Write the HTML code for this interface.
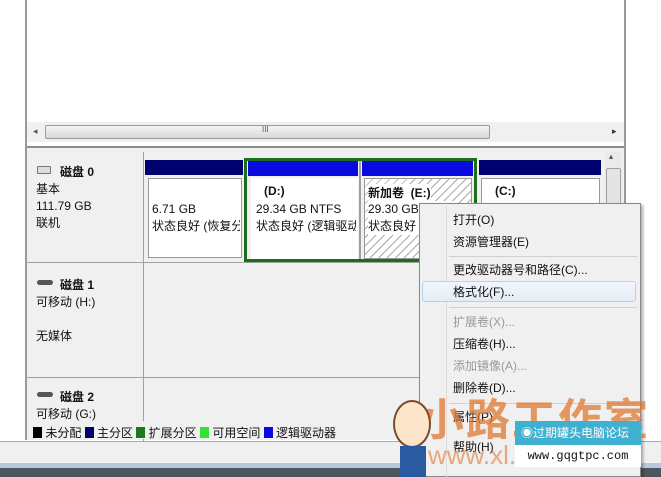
<!DOCTYPE html>
<html><head><meta charset="utf-8"><style>
*{margin:0;padding:0;box-sizing:border-box}
body{width:661px;height:477px;overflow:hidden;background:#fff;position:relative;font-family:"Liberation Sans","Noto Sans CJK SC",sans-serif;font-size:12px;color:#111}
.a{position:absolute}
</style></head><body>
<div class="a" style="left:25px;top:0;width:2px;height:440px;background:#9a9a9a"></div>
<div class="a" style="left:624px;top:0;width:2px;height:440px;background:#9a9a9a"></div>
<div class="a" style="left:27px;top:122px;width:597px;height:20px;background:#f0f0f0"></div>
<div class="a" style="left:33px;top:126px;font-size:9px;color:#555">◂</div>
<div class="a" style="left:612px;top:126px;font-size:9px;color:#333">▸</div>
<div class="a" style="left:45px;top:125px;width:445px;height:14px;border:1px solid #9a9a9a;border-radius:2px;background:linear-gradient(#f4f4f4,#d8d8d8)"></div>
<div class="a" style="left:262px;top:125px;font-size:8px;color:#555">III</div>
<div class="a" style="left:27px;top:146px;width:597px;height:2px;background:#8c8c8c"></div>
<div class="a" style="left:27px;top:148px;width:597px;height:292px;background:#f0f0f0"></div>
<div class="a" style="left:143px;top:152px;width:1px;height:290px;background:#a0a0a0"></div>
<div class="a" style="left:27px;top:262px;width:578px;height:1px;background:#a0a0a0"></div>
<div class="a" style="left:27px;top:377px;width:578px;height:1px;background:#a0a0a0"></div>
<div class="a" style="left:605px;top:152px;width:17px;height:288px;background:#eaeaea"></div>
<div class="a" style="left:609px;top:152px;font-size:8px;color:#444">▴</div>
<div class="a" style="left:606px;top:168px;width:15px;height:60px;border:1px solid #a0a0a0;background:#e4e4e4;border-radius:2px"></div>
<div class="a" style="left:37px;top:166px;width:14px;height:8px;border:1px solid #777;background:#ddd;border-radius:1px"></div>
<div class="a" style="left:60px;top:163px;font-weight:bold">磁盘 0</div>
<div class="a" style="left:36px;top:181px;line-height:17px">基本<br>111.79 GB<br>联机</div>
<div class="a" style="left:145px;top:160px;width:98px;height:15px;background:#00006f"></div>
<div class="a" style="left:148px;top:178px;width:94px;height:80px;background:#fff;border:1px solid #999"></div>
<div class="a" style="left:152px;top:201px;line-height:17px;white-space:nowrap;width:88px;overflow:hidden">6.71 GB<br>状态良好 (恢复分</div>
<div class="a" style="left:244px;top:158px;width:233px;height:104px;border:3px solid #1c6e1c"></div>
<div class="a" style="left:248px;top:161px;width:110px;height:15px;background:#0a0ae0"></div>
<div class="a" style="left:362px;top:161px;width:111px;height:15px;background:#0a0ae0"></div>
<div class="a" style="left:359px;top:161px;width:2px;height:98px;background:#a0a0a0"></div>
<div class="a" style="left:251px;top:178px;width:107px;height:81px;background:#fff"></div>
<div class="a" style="left:364px;top:178px;width:108px;height:81px;background:repeating-linear-gradient(135deg,#fff 0 5px,#aaa 5px 6px);border:1px solid #999"></div>
<div class="a" style="left:264px;top:184px;font-weight:bold">(D:)</div>
<div class="a" style="left:256px;top:201px;line-height:17px;white-space:nowrap;width:100px;overflow:hidden">29.34 GB NTFS<br>状态良好 (逻辑驱动</div>
<div class="a" style="left:368px;top:184px;font-weight:bold;background:#fff">新加卷 &nbsp;(E:)</div>
<div class="a" style="left:368px;top:201px;line-height:17px;white-space:nowrap;background:#fff">29.30 GB NTFS<br>状态良好</div>
<div class="a" style="left:479px;top:160px;width:122px;height:15px;background:#00006f"></div>
<div class="a" style="left:481px;top:178px;width:119px;height:80px;background:#fff;border:1px solid #999"></div>
<div class="a" style="left:495px;top:184px;font-weight:bold">(C:)</div>
<div class="a" style="left:37px;top:280px;width:16px;height:5px;background:#555;border-radius:3px"></div>
<div class="a" style="left:60px;top:276px;font-weight:bold">磁盘 1</div>
<div class="a" style="left:36px;top:293px">可移动 (H:)</div>
<div class="a" style="left:36px;top:327px">无媒体</div>
<div class="a" style="left:37px;top:392px;width:16px;height:5px;background:#555;border-radius:3px"></div>
<div class="a" style="left:60px;top:388px;font-weight:bold">磁盘 2</div>
<div class="a" style="left:36px;top:405px">可移动 (G:)</div>
<div class="a" style="left:28px;top:421px;width:400px;height:18px;background:#f0f0f0"></div>
<div class="a" style="left:33px;top:424px;white-space:nowrap;font-size:12px">
<span style="display:inline-block;width:9px;height:11px;background:#000;vertical-align:-1px"></span> 未分配 <span style="display:inline-block;width:9px;height:11px;background:#00006f;vertical-align:-1px"></span> 主分区 <span style="display:inline-block;width:9px;height:11px;background:#1c7a1c;vertical-align:-1px"></span> 扩展分区 <span style="display:inline-block;width:9px;height:11px;background:#33e033;vertical-align:-1px"></span> 可用空间 <span style="display:inline-block;width:9px;height:11px;background:#0a0ae0;vertical-align:-1px"></span> 逻辑驱动器</div>
<div class="a" style="left:0;top:441px;width:661px;height:22px;background:#f0f0f0;border-top:1px solid #aaa"></div>
<div class="a" style="left:0;top:463px;width:661px;height:5px;background:#b8c8dc"></div>
<div class="a" style="left:0;top:468px;width:661px;height:9px;background:#4e555c"></div>
<!-- context menu -->
<div class="a" style="left:419px;top:203px;width:222px;height:274px;background:#f0f0f0;border:1px solid #888;box-shadow:2px 2px 3px rgba(0,0,0,.35)"></div>
<div class="a" style="left:446px;top:205px;width:1px;height:272px;background:#ddd"></div>
<div class="a" style="left:449px;top:256px;width:188px;height:1px;background:#d0d0d0"></div>
<div class="a" style="left:449px;top:307px;width:188px;height:1px;background:#d0d0d0"></div>
<div class="a" style="left:449px;top:403px;width:188px;height:1px;background:#d0d0d0"></div>
<div class="a" style="left:422px;top:281px;width:214px;height:21px;border:1px solid #b8d0ea;border-radius:3px;background:linear-gradient(#f2f6fb,#e3ecf6)"></div>
<div class="a" style="left:453px;top:209px;line-height:22px;white-space:nowrap">
<div>打开(O)</div><div>资源管理器(E)</div></div>
<div class="a" style="left:453px;top:259px;line-height:22px;white-space:nowrap">
<div>更改驱动器号和路径(C)...</div><div>格式化(F)...</div></div>
<div class="a" style="left:453px;top:311px;line-height:22px;white-space:nowrap">
<div style="color:#999">扩展卷(X)...</div><div>压缩卷(H)...</div><div style="color:#999">添加镜像(A)...</div><div>删除卷(D)...</div></div>
<div class="a" style="left:453px;top:408px">属性(P)</div>
<div class="a" style="left:453px;top:438px">帮助(H)</div>
<!-- watermark over menu -->
<div class="a" style="left:420px;top:396px;font-size:44px;line-height:50px;color:#e07830;opacity:.75;letter-spacing:2px;white-space:nowrap;font-weight:bold">小路工作室</div>
<div class="a" style="left:428px;top:440px;font-size:26px;line-height:30px;color:#e07830;opacity:.6;white-space:nowrap">www.xl.com</div>
<div class="a" style="left:393px;top:400px;width:38px;height:48px;border-radius:50%;background:#fde5cc;border:2px solid #7a4a2a"></div>
<div class="a" style="left:400px;top:446px;width:26px;height:31px;background:#2a5aa0"></div>
<div class="a" style="left:515px;top:421px;width:126px;height:24px;background:#3fb0d0;color:#fff;font-size:12px;line-height:24px;padding-left:6px;white-space:nowrap">◉过期罐头电脑论坛</div>
<div class="a" style="left:515px;top:445px;width:126px;height:22px;background:#fff;font-size:12px;line-height:22px;text-align:center;font-family:'Liberation Mono',monospace">www.gqgtpc.com</div>
</body></html>
